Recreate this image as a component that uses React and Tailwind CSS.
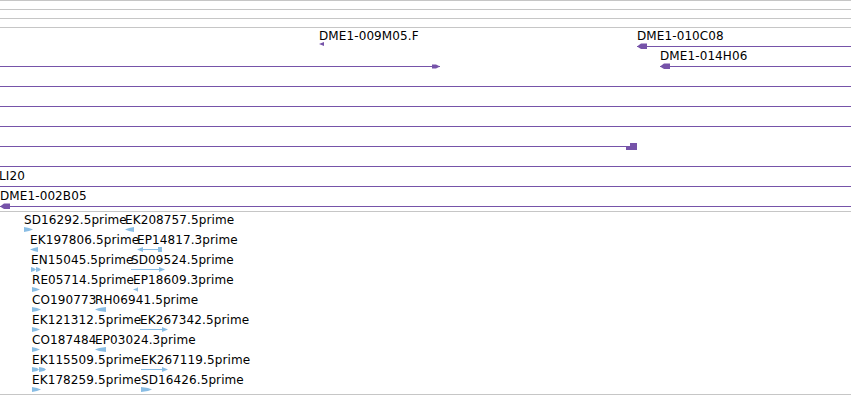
import React from 'react'

// colours picked off the reference
const PURPLE = '#7653a9'
const BLUE = '#89bde4'

// --- upper track (purple alignments) ---
// line: [start, end, head]  head = 'l' | 'r' | 'block' | null
const topRows = [
  {
    labels: [
      { x: 319, text: 'DME1-009M05.F' },
      { x: 637, text: 'DME1-010C08' },
    ],
    lines: [[637, 851, 'l']],
    ticks: [319],
  },
  {
    labels: [{ x: 660, text: 'DME1-014H06' }],
    lines: [
      [0, 440, 'r'],
      [660, 851, 'l'],
    ],
  },
  { labels: [], lines: [[0, 851, null]] },
  { labels: [], lines: [[0, 851, null]] },
  { labels: [], lines: [[0, 851, null]] },
  { labels: [], lines: [[0, 637, 'block']] },
  { labels: [], lines: [[0, 851, null]] },
  { labels: [{ x: -1, text: 'LI20' }], lines: [[0, 851, null]] },
  { labels: [{ x: 0, text: 'DME1-002B05' }], lines: [[0, 851, 'l']] },
]

// --- lower track (ESTs) ---
const estRows = [
  [
    { x: 24, text: 'SD16292.5prime', g: 'r', w: 9 },
    { x: 125, text: 'EK208757.5prime', g: 'l', w: 9 },
  ],
  [
    { x: 30, text: 'EK197806.5prime', g: 'l', w: 8 },
    { x: 137, text: 'EP14817.3prime', g: 'lspan', w: 25 },
  ],
  [
    { x: 31, text: 'EN15045.5prime', g: 'rr', w: 10 },
    { x: 131, text: 'SD09524.5prime', g: 'rspan', w: 34 },
  ],
  [
    { x: 32, text: 'RE05714.5prime', g: 'r', w: 8 },
    { x: 133, text: 'EP18609.3prime', g: 'l', w: 5 },
  ],
  [
    { x: 32, text: 'CO190773', g: 'r', w: 9 },
    { x: 95, text: 'RH06941.5prime', g: 'l', w: 11 },
  ],
  [
    { x: 32, text: 'EK121312.5prime', g: 'r', w: 8 },
    { x: 140, text: 'EK267342.5prime', g: 'rspan', w: 28 },
  ],
  [
    { x: 32, text: 'CO187484', g: 'r', w: 8 },
    { x: 95, text: 'EP03024.3prime', g: 'l', w: 11 },
  ],
  [
    { x: 32, text: 'EK115509.5prime', g: 'rr', w: 14 },
    { x: 141, text: 'EK267119.5prime', g: 'rspan', w: 27 },
  ],
  [
    { x: 32, text: 'EK178259.5prime', g: 'r', w: 9 },
    { x: 141, text: 'SD16426.5prime', g: 'r', w: 11 },
  ],
]

function Label({ x, text }) {
  return (
    <span className="absolute top-[1px] whitespace-nowrap text-black tracking-[0.1px]" style={{ left: x }}>
      {text}
    </span>
  )
}

function Head({ x, dir }) {
  if (dir === 'block') {
    return (
      <svg className="absolute top-[15px]" style={{ left: x - 11 }} width="11" height="7" viewBox="0 0 11 7">
        <polygon points="0,3 4,3 4,0 11,0 11,7 0,7" fill={PURPLE} />
      </svg>
    )
  }
  if (dir === 'r') {
    return (
      <svg className="absolute top-[15px]" style={{ left: x - 8 }} width="8" height="7" viewBox="0 0 8 7">
        <polygon points="0,1.5 4,1.5 8,3.5 4,5.5 0,5.5" fill={PURPLE} />
      </svg>
    )
  }
  return (
    <svg className="absolute top-[15px]" style={{ left: x }} width="10" height="7" viewBox="0 0 10 7">
      <polygon points="0,3.5 4,0.5 10,0.5 10,6 4,6" fill={PURPLE} />
    </svg>
  )
}

function TopRow({ row }) {
  return (
    <div className="relative h-[20px]">
      {row.labels.map((l) => (
        <Label key={l.text} {...l} />
      ))}
      {row.lines.map(([a, b, head], i) => (
        <React.Fragment key={i}>
          <div className="absolute top-[18px] h-px" style={{ left: a, width: b - a, background: PURPLE }} />
          {head === 'l' && <Head x={a} dir="l" />}
          {head === 'r' && <Head x={b} dir="r" />}
          {head === 'block' && <Head x={b} dir="block" />}
        </React.Fragment>
      ))}
      {(row.ticks || []).map((x) => (
        <svg key={x} className="absolute top-[14px]" style={{ left: x }} width="5" height="4" viewBox="0 0 5 4">
          <polygon points="0,2 5,0 5,4" fill={PURPLE} />
        </svg>
      ))}
    </div>
  )
}

function EstGlyph({ g, w }) {
  let shape
  if (g === 'r') {
    shape = <polygon points={`0,0 ${w - 4},1 ${w},2.5 ${w - 4},4 0,5`} fill={BLUE} />
  } else if (g === 'l') {
    shape = <polygon points={`${w},0 4,1 0,2.5 4,4 ${w},5`} fill={BLUE} />
  } else if (g === 'rr') {
    const h = w / 2
    shape = (
      <>
        <polygon points={`0,0 ${h - 2},1 ${h},2.5 ${h - 2},4 0,5`} fill={BLUE} />
        <polygon points={`${h},0 ${w - 2},1 ${w},2.5 ${w - 2},4 ${h},5`} fill={BLUE} />
      </>
    )
  } else if (g === 'rspan') {
    shape = (
      <>
        <rect x="0" y="2" width={w - 5} height="1" fill={BLUE} />
        <polygon points={`${w - 6},0 ${w},2.5 ${w - 6},5`} fill={BLUE} />
      </>
    )
  } else {
    shape = (
      <>
        <polygon points="6,0 0,2.5 6,5" fill={BLUE} />
        <rect x="5" y="2" width={w - 9} height="1" fill={BLUE} />
        <rect x={w - 4} y="0" width="4" height="5" fill={BLUE} />
      </>
    )
  }
  return (
    <svg width={w} height="5" viewBox={`0 0 ${w} 5`}>
      {shape}
    </svg>
  )
}

function EstRow({ row }) {
  return (
    <div className="relative h-[20px]">
      {row.map((f) => (
        <React.Fragment key={f.text}>
          <Label x={f.x} text={f.text} />
          <div className="absolute top-[15px] flex" style={{ left: f.x }}>
            <EstGlyph g={f.g} w={f.w} />
          </div>
        </React.Fragment>
      ))}
    </div>
  )
}

export default function App() {
  return (
    <div className="w-[851px] h-[395px] overflow-hidden bg-white font-['DejaVu_Sans',sans-serif] text-[12px] leading-[14px]">
      <div className="h-[9px] border-t border-[#c6c6c6]" />
      <div className="h-[9px] border-t border-[#c6c6c6]" />
      <div className="h-[9px] border-t border-[#c6c6c6]" />
      {/* alignment track */}
      <div className="border-t border-[#c6c6c6] pb-[3px]">
        {topRows.map((row, i) => (
          <TopRow key={i} row={row} />
        ))}
      </div>
      {/* EST track */}
      <div className="border-t border-b border-[#c6c6c6] pb-[2px]">
        {estRows.map((row, i) => (
          <EstRow key={i} row={row} />
        ))}
      </div>
    </div>
  )
}
